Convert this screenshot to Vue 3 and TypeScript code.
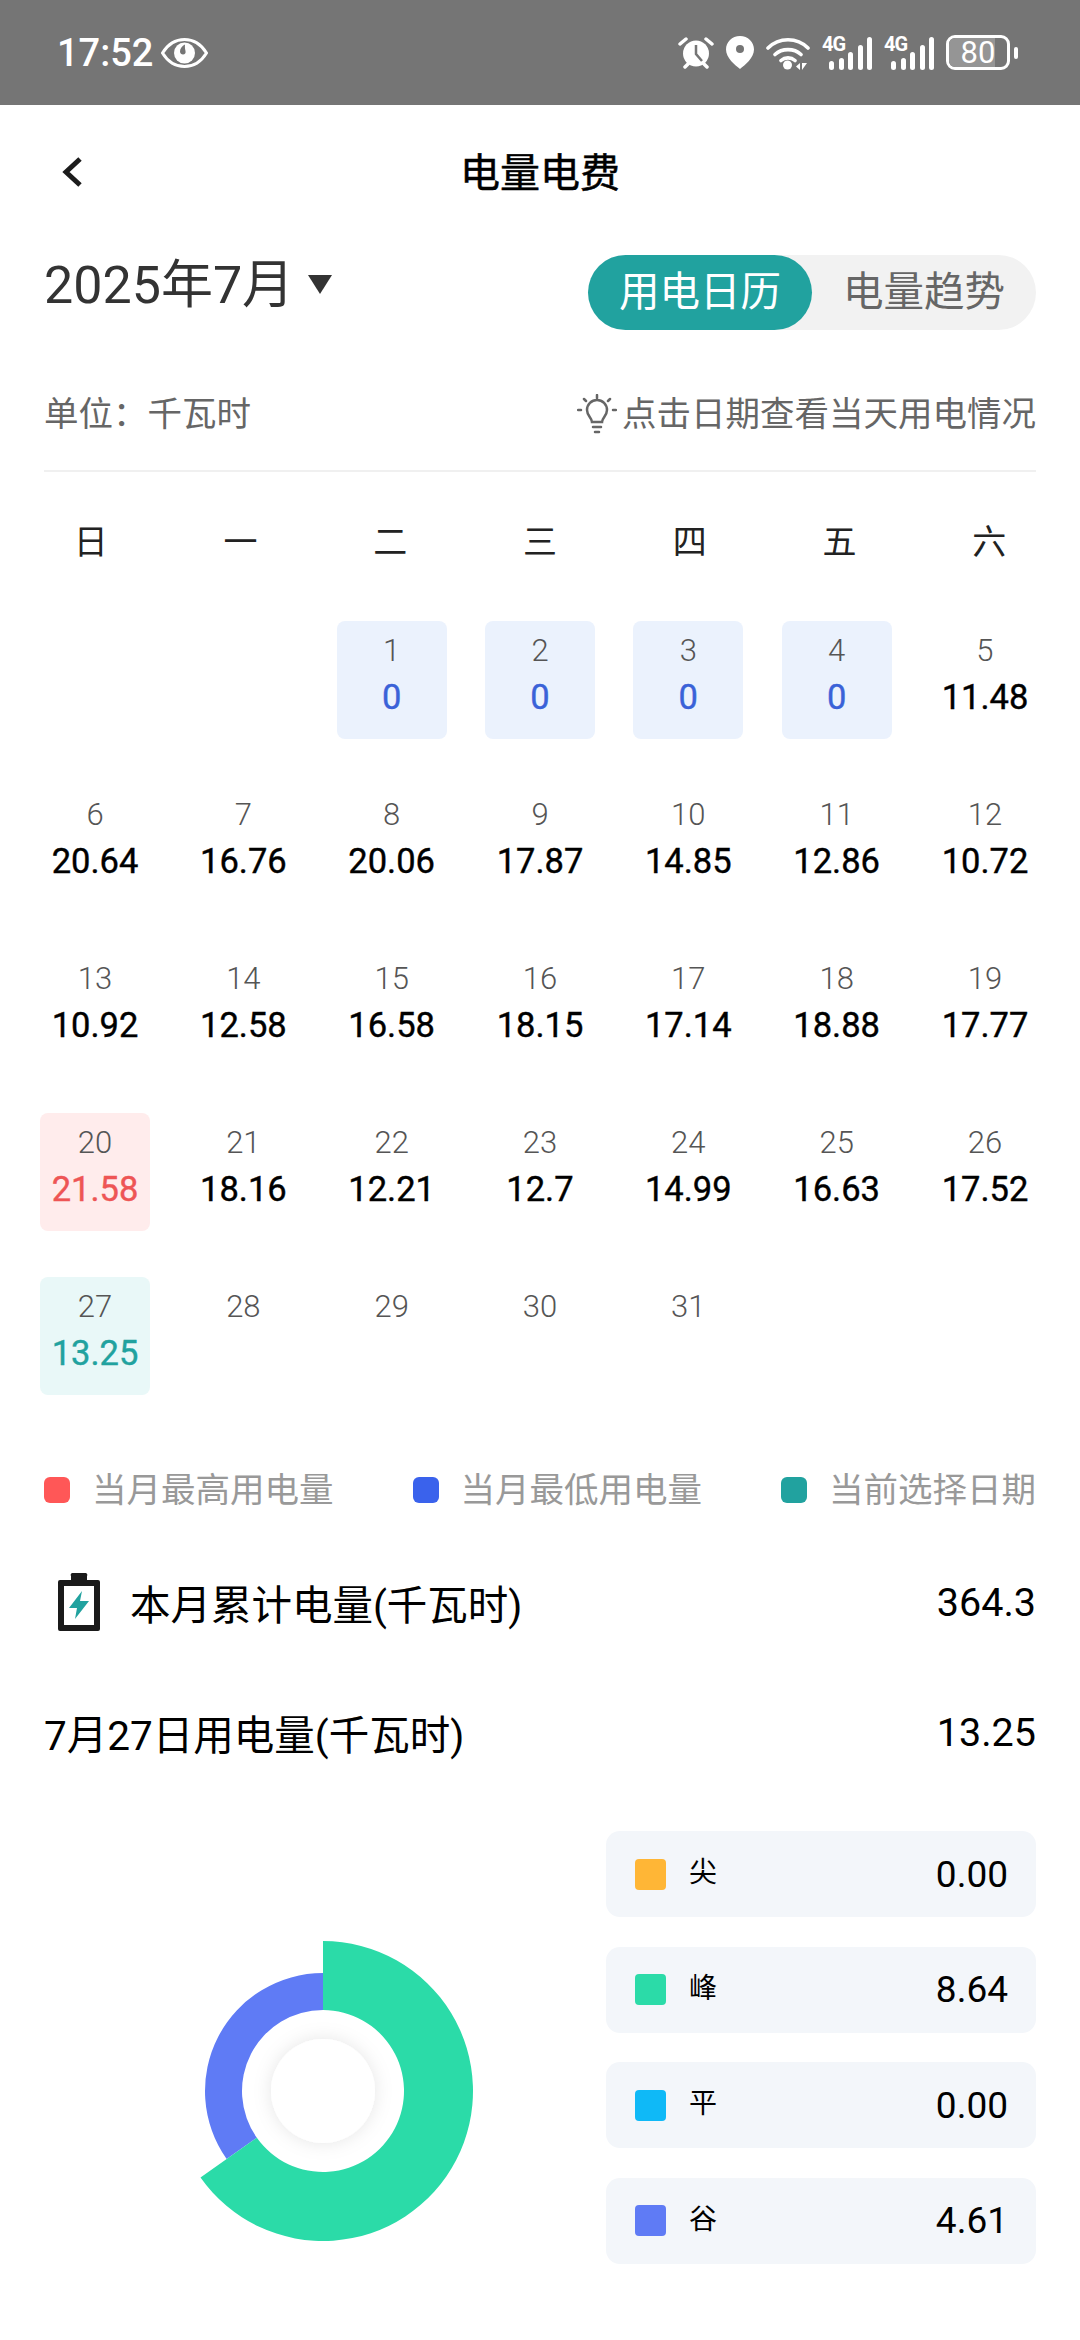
<script setup lang="ts">
import { computed } from 'vue';

interface DayCell {
  day?: number;
  value?: string;
  kind?: 'low' | 'high' | 'selected';
}

const weekdays = ['日', '一', '二', '三', '四', '五', '六'];

const values = [
  '0', '0', '0', '0', '11.48', '20.64', '16.76', '20.06', '17.87', '14.85', '12.86', '10.72',
  '10.92', '12.58', '16.58', '18.15', '17.14', '18.88', '17.77', '21.58', '18.16', '12.21',
  '12.7', '14.99', '16.63', '17.52', '13.25',
];

function kindOf (day: number): DayCell['kind'] {
  if (day <= 4) return 'low';
  if (day === 20) return 'high';
  if (day === 27) return 'selected';
  return undefined;
}

const cells = computed<DayCell[]>(() => {
  const list: DayCell[] = [{}, {}];
  for (let day = 1; day <= 31; day++) {
    list.push({ day, value: values[day - 1], kind: kindOf(day) });
  }
  return list;
});

const legend = [
  { label: '当月最高用电量', color: '#ff5757' },
  { label: '当月最低用电量', color: '#3a62ec' },
  { label: '当前选择日期', color: '#21a29f' },
];

const periods = [
  { name: '尖', value: 0, color: '#ffb636' },
  { name: '峰', value: 8.64, color: '#2bdba8' },
  { name: '平', value: 0, color: '#0fb9f7' },
  { name: '谷', value: 4.61, color: '#5f7bf5' },
];

const signalBars = [9, 12, 18, 25, 33];

const center = 160;
const innerRadius = 81;

function point (radius: number, deg: number) {
  const rad = (deg * Math.PI) / 180;
  return `${center + radius * Math.sin(rad)} ${center - radius * Math.cos(rad)}`;
}

function slice (from: number, to: number, outer: number) {
  const large = to - from > 180 ? 1 : 0;
  return `M${point(outer, from)} A${outer} ${outer} 0 ${large} 1 ${point(outer, to)} L${point(innerRadius, to)} A${innerRadius} ${innerRadius} 0 ${large} 0 ${point(innerRadius, from)} Z`;
}

const peakEnd = (8.64 / 13.25) * 360;
const peakPath = slice(0, peakEnd, 150);
const valleyPath = slice(peakEnd, 360, 118);
</script>

<template>
  <div class="page">
    <div class="status-bar">
      <div class="status-left">
        <span class="time">17:52</span>
        <svg class="eye" width="47" height="30" viewBox="0 0 47 30">
          <path d="M1.500 15C7 6 14.500 1.500 23.500 1.500S40 6 45.500 15C40 24 32.500 28.500 23.500 28.500S7 24 1.500 15Z" fill="none" stroke="#fff" stroke-width="3" />
          <circle cx="23.500" cy="15" r="10.500" fill="#fff" />
          <path d="M24 6.500c-3 1.500-5 4-5 7 0 2 1.500 3 3 3 2 0 3-1.500 2.500-3.500-.4-1.800-.8-4-.5-6.500Z" fill="#757575" />
        </svg>
      </div>
      <div class="status-right">
        <svg class="alarm" width="36" height="33" viewBox="0 0 36 33">
          <circle cx="18" cy="17.500" r="13" fill="#fff" />
          <path d="M18 9v9l6 7" fill="none" stroke="#757575" stroke-width="2.500" />
          <path d="M2 8l6-5M34 8l-6-5M7 31l3-3M29 31l-3-3" fill="none" stroke="#fff" stroke-width="3.500" stroke-linecap="round" />
        </svg>
        <svg class="pin" width="28" height="33" viewBox="0 0 28 33">
          <path d="M14 0C6 0 0 6 0 13.500 0 22 9 29 14 33c5-4 14-11 14-19.500C28 6 22 0 14 0Z" fill="#fff" />
          <circle cx="14" cy="13" r="4" fill="#757575" />
        </svg>
        <svg class="wifi" width="44" height="35" viewBox="0 0 44 35">
          <path d="M2 13C13 2 31 2 42 13M9 19.500C16 13 28 13 35 19.500M15 25.500C19 22 25 22 29 25.500" fill="none" stroke="#fff" stroke-width="3.600" stroke-linecap="round" />
          <circle cx="21.500" cy="30" r="4.500" fill="#fff" />
          <path d="M34 28l-4 3.500 4 3.500ZM36 28v7l5-7Z" fill="#fff" />
        </svg>
        <div v-for="n in 2" :key="n" class="signal">
          <span class="net">4G</span>
          <div class="bars">
            <i v-for="h in signalBars" :key="h" :style="{ height: h + 'px' }" />
          </div>
        </div>
        <div class="battery">
          <div class="battery-fill" />
          <span class="battery-num">80</span>
        </div>
        <div class="battery-nub" />
      </div>
    </div>

    <div class="nav">
      <svg class="back" width="24" height="38" viewBox="0 0 24 38">
        <path d="M20 6L6 19l14 13" fill="none" stroke="#1c1c1c" stroke-width="5" />
      </svg>
      <span class="nav-title">电量电费</span>
    </div>

    <div class="month-row">
      <div class="month">
        <span>2025年7月</span>
        <i class="caret" />
      </div>
      <div class="toggle">
        <span class="toggle-item active">用电日历</span>
        <span class="toggle-item">电量趋势</span>
      </div>
    </div>

    <div class="unit-row">
      <span>单位：千瓦时</span>
      <span class="hint">
        <svg width="40" height="40" viewBox="0 0 40 40">
          <g fill="none" stroke="#666" stroke-width="2.500" stroke-linecap="round">
            <path d="M15 28c0-4-5-6-5-12a10 10 0 0 1 20 0c0 6-5 8-5 12Z" />
            <path d="M20 1v3M7 5l2 2M33 5l-2 2M1 16h3M36 16h3M16 33h8M18 38h4" />
          </g>
        </svg>
        点击日期查看当天用电情况
      </span>
    </div>

    <div class="weekdays">
      <span v-for="w in weekdays" :key="w">{{ w }}</span>
    </div>

    <div class="calendar">
      <div v-for="(cell, i) in cells" :key="i" class="cell" :class="cell.kind">
        <span class="day">{{ cell.day }}</span>
        <span class="value">{{ cell.value }}</span>
      </div>
    </div>

    <div class="legend">
      <div v-for="item in legend" :key="item.label" class="legend-item">
        <i :style="{ background: item.color }" />
        <span>{{ item.label }}</span>
      </div>
    </div>

    <div class="total-row">
      <div class="total-label">
        <svg width="42" height="58" viewBox="0 0 42 58">
          <path d="M13 3a2 2 0 0 1 2-3h12a2 2 0 0 1 2 3v4h11a2 2 0 0 1 2 2v47a2 2 0 0 1-2 2H2a2 2 0 0 1-2-2V9a2 2 0 0 1 2-2h11Z" fill="#1a1a1a" />
          <rect x="6" y="13" width="30" height="39" fill="#fff" />
          <path d="M24 18L11 35h8l-2 11 14-18h-9Z" fill="#21a29f" />
        </svg>
        <span>本月累计电量(千瓦时)</span>
      </div>
      <span class="amount">364.3</span>
    </div>

    <div class="day-row">
      <span>7月27日用电量(千瓦时)</span>
      <span class="amount">13.25</span>
    </div>

    <div class="breakdown">
      <svg class="donut" width="320" height="320" viewBox="0 0 320 320">
        <defs>
          <filter id="soft" x="-50%" y="-50%" width="200%" height="200%">
            <feDropShadow dx="0" dy="0" stdDeviation="9" flood-color="#000" flood-opacity="0.1" />
          </filter>
        </defs>
        <path :d="valleyPath" fill="#5f7bf5" />
        <path :d="peakPath" fill="#2bdba8" />
        <circle :cx="center" :cy="center" r="52" fill="#fff" filter="url(#soft)" />
      </svg>
      <div class="periods">
        <div v-for="p in periods" :key="p.name" class="period">
          <i :style="{ background: p.color }" />
          <span class="period-name">{{ p.name }}</span>
          <span class="period-value">{{ p.value.toFixed(2) }}</span>
        </div>
      </div>
    </div>
  </div>
</template>

<style>
html, body {
  margin: 0;
  background: #fff;
}
</style>

<style scoped>
.page {
  width: 1080px;
  height: 2340px;
  overflow: hidden;
  background: #fff;
  font-family: Roboto, "Noto Sans CJK SC", sans-serif;
  color: #000;
}

.status-bar {
  height: 105px;
  background: #757575;
  display: flex;
  justify-content: space-between;
  align-items: center;
  padding: 0 62px 0 57px;
  color: #fff;
  box-sizing: border-box;
}

.status-left,
.status-right {
  display: flex;
  align-items: center;
}

.time {
  font-size: 38px;
  font-weight: 500;
  line-height: 44px;
}

.eye {
  margin-left: 8px;
}

.alarm { margin-right: 12px; }
.pin { margin-right: 12px; }
.wifi { margin-right: 12px; }

.signal {
  width: 50px;
  height: 34px;
  margin-right: 12px;
  position: relative;
}

.net {
  position: absolute;
  left: 0;
  top: -2px;
  font-size: 20px;
  font-weight: 700;
  line-height: 20px;
  letter-spacing: -1px;
}

.bars {
  position: absolute;
  right: 0;
  bottom: 0;
  display: flex;
  align-items: flex-end;
  gap: 4.5px;
}

.bars i {
  width: 5px;
  border-radius: 3px;
  background: #fff;
}

.battery {
  width: 64px;
  height: 35px;
  box-sizing: border-box;
  border: 3px solid #fff;
  border-radius: 9px;
  position: relative;
  overflow: hidden;
  display: flex;
  align-items: center;
  justify-content: center;
}

.battery-fill {
  position: absolute;
  left: 0;
  top: 0;
  bottom: 0;
  width: 80%;
  background: #959595;
}

.battery-num {
  position: relative;
  font-size: 31px;
  line-height: 30px;
}

.battery-nub {
  width: 4px;
  height: 12px;
  margin-left: 4px;
  border-radius: 2px;
  background: #fff;
}

.nav {
  height: 130px;
  position: relative;
  display: flex;
  align-items: center;
  justify-content: center;
}

.back {
  position: absolute;
  left: 60px;
  top: 48px;
}

.nav-title {
  font-size: 40px;
  font-weight: 400;
  -webkit-text-stroke: 0.5px #000;
}

.month-row {
  margin-top: 20px;
  padding: 0 44px;
  display: flex;
  justify-content: space-between;
  align-items: flex-start;
}

.month {
  display: flex;
  align-items: center;
  gap: 14px;
  height: 50px;
  font-size: 52px;
  color: #333;
}

.caret {
  width: 0;
  height: 0;
  border-left: 12.5px solid transparent;
  border-right: 12.5px solid transparent;
  border-top: 19px solid #333;
  margin-top: 8px;
}

.toggle {
  width: 448px;
  height: 75px;
  border-radius: 38px;
  background: #f2f2f2;
  display: flex;
}

.toggle-item {
  flex: 1;
  display: flex;
  align-items: center;
  justify-content: center;
  font-size: 40.5px;
  padding-bottom: 8px;
  box-sizing: border-box;
  color: #666;
  border-radius: 38px;
}

.toggle-item.active {
  background: #21a29f;
  color: #fff;
}

.unit-row {
  margin: 60px 44px 0;
  height: 80px;
  border-bottom: 2px solid #f0f0f0;
  display: flex;
  justify-content: space-between;
  align-items: flex-start;
  font-size: 34.500px;
  line-height: 48px;
  color: #666;
}

.hint {
  display: flex;
  align-items: center;
}

.hint svg {
  margin-right: 5px;
}

.weekdays {
  margin-top: 48px;
  padding: 0 16px;
  display: grid;
  grid-template-columns: repeat(7, 1fr);
  text-align: center;
  font-size: 34px;
  line-height: 44px;
  color: #222;
}

.calendar {
  margin-top: 57px;
  padding: 0 40px;
  display: grid;
  grid-template-columns: repeat(7, 110px);
  grid-auto-rows: 118px;
  justify-content: space-between;
  row-gap: 46px;
}

.cell {
  border-radius: 8px;
  display: flex;
  flex-direction: column;
  align-items: center;
  box-sizing: border-box;
  padding-top: 12px;
}

.day {
  font-size: 31px;
  line-height: 36px;
  height: 36px;
  font-weight: 300;
  color: #555;
}

.value {
  margin-top: 8px;
  font-size: 34.500px;
  line-height: 40px;
  color: #000;
  -webkit-text-stroke: 0.4px currentColor;
}

.cell.low { background: #ebf2fd; }
.cell.low .value { color: #3a62d8; }
.cell.high { background: #ffecec; }
.cell.high .value { color: #ee5555; }
.cell.selected { background: #e9f8f8; }
.cell.selected .value { color: #21a29f; }

.legend {
  margin-top: 75px;
  padding: 0 44px;
  display: flex;
  justify-content: space-between;
}

.legend-item {
  display: flex;
  align-items: center;
  font-size: 34.500px;
  line-height: 40px;
  color: #999;
}

.legend-item i {
  width: 26px;
  height: 26px;
  border-radius: 6px;
  margin-right: 22px;
}

.total-row,
.day-row {
  padding: 0 44px;
  display: flex;
  justify-content: space-between;
  align-items: center;
  font-size: 40.500px;
}

.amount {
  font-size: 39.500px;
}

.total-row {
  margin-top: 59px;
  height: 66px;
}

.total-label {
  display: flex;
  align-items: center;
  gap: 30px;
  padding-left: 14px;
}

.day-row {
  margin-top: 72px;
  height: 50px;
}

.breakdown {
  margin-top: 74px;
  padding: 0 44px 0 163px;
  display: flex;
  justify-content: space-between;
  align-items: flex-start;
}

.donut {
  margin-top: 100px;
}

.periods {
  width: 430px;
  display: flex;
  flex-direction: column;
  gap: 29.500px;
}

.period {
  height: 86px;
  border-radius: 14px;
  background: #f3f6fa;
  display: flex;
  align-items: center;
  padding: 0 28px 0 29px;
}

.period i {
  width: 31px;
  height: 31px;
  border-radius: 4px;
}

.period-name {
  margin-left: 23px;
  font-size: 28px;
  line-height: 34px;
  padding-bottom: 2px;
}

.period-value {
  margin-left: auto;
  font-size: 37px;
}
</style>
